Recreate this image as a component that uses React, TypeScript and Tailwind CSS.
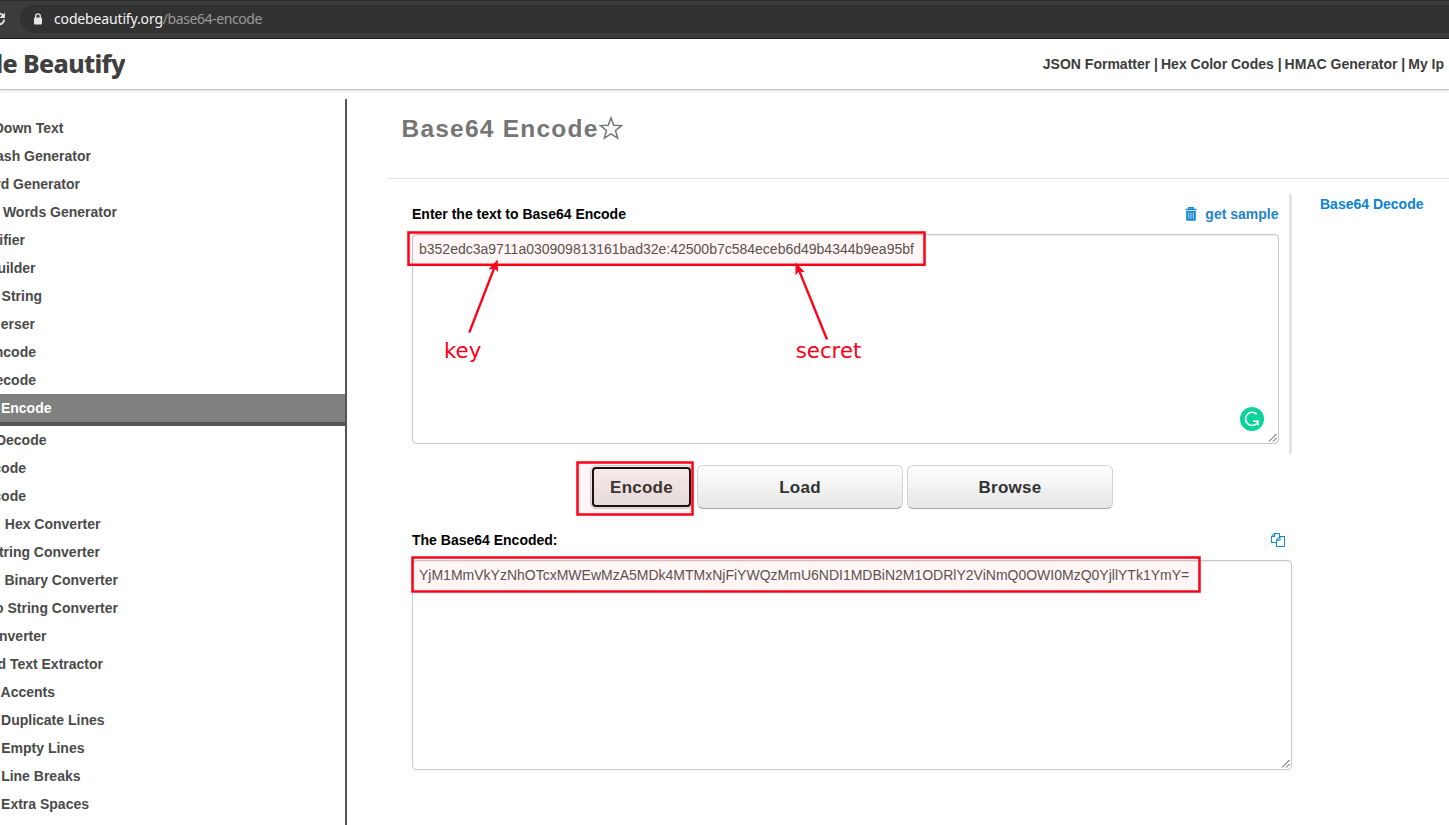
import React from "react";

type Item = { label: string; end: string; active?: boolean };

const items: Item[] = [
  { label: "Down Text", end: "w-[63.5px]" },
  { label: "ash Generator", end: "w-[91px]" },
  { label: "rd Generator", end: "w-[80px]" },
  { label: "Words Generator", end: "w-[117px]" },
  { label: "ifier", end: "w-[25px]" },
  { label: "uilder", end: "w-[35.5px]" },
  { label: "String", end: "w-[42px]" },
  { label: "erser", end: "w-[35px]" },
  { label: "ncode", end: "w-[36px]" },
  { label: "ecode", end: "w-[36px]" },
  { label: "Encode", end: "w-[51.5px]", active: true },
  { label: "Decode", end: "w-[46.5px]" },
  { label: "code", end: "w-[26px]" },
  { label: "code", end: "w-[26px]" },
  { label: "Hex Converter", end: "w-[100.5px]" },
  { label: "tring Converter", end: "w-[100px]" },
  { label: "Binary Converter", end: "w-[118px]" },
  { label: "o String Converter", end: "w-[118px]" },
  { label: "nverter", end: "w-[46.5px]" },
  { label: "d Text Extractor", end: "w-[103px]" },
  { label: "Accents", end: "w-[55px]" },
  { label: "Duplicate Lines", end: "w-[104.5px]" },
  { label: "Empty Lines", end: "w-[84.5px]" },
  { label: "Line Breaks", end: "w-[80.5px]" },
  { label: "Extra Spaces", end: "w-[89px]" },
];

function AddressBar() {
  return (
    <div className="flex h-[39px] shrink-0 items-start border-b border-[#1c1c1c] bg-[#3c3c3c] pt-[5px] shadow-[inset_0_1px_0_#2c2c2c]">
      <svg className="h-7 w-5 shrink-0" viewBox="0 0 20 28" fill="none">
        <path d="M-4 9.5A5.2 5.2 0 0 1 3.5 11M4.2 14.5A5.2 5.2 0 0 1-3 19" stroke="#e8e8e8" strokeWidth="1.9" />
        <path d="M4.9 7.5V13H-.6Z" fill="#e8e8e8" />
      </svg>
      <div className="flex h-7 flex-1 items-center rounded-l-full bg-[#323232] pl-[13px]">
        <svg className="h-3 w-[10px]" viewBox="0 0 10 12">
          <rect x="1" y="4.5" width="8" height="7" rx="1" fill="#e6e6e6" />
          <path d="M2.7 5V3.2a2.3 2.3 0 0 1 4.6 0V5" fill="none" stroke="#e6e6e6" strokeWidth="1.3" />
        </svg>
        <div className="pl-[11px] font-['Noto_Sans',sans-serif] text-[14px] leading-7 tracking-[-0.43px] whitespace-nowrap text-[#9a9a9a]">
          <span className="tracking-[-0.15px] text-[#f2f2f2]">codebeautify.org</span>/base64-encode
        </div>
      </div>
    </div>
  );
}

function Header() {
  return (
    <header className="flex h-[51px] shrink-0 items-center justify-between border-b border-[#c4c4c4] bg-white shadow-[0_1px_3px_rgba(0,0,0,0.15)]">
      <div className="flex w-[125px] justify-end overflow-hidden pb-[3px] font-['Noto_Sans',sans-serif] text-[25px] leading-[48px] font-extrabold tracking-[-0.65px] whitespace-nowrap text-[#404040]">
        <span>de Beautify</span>
      </div>
      <nav className="flex gap-[3px] pr-[5px] text-[14px] font-bold whitespace-nowrap text-[#3c3c3c]">
        <span>JSON Formatter |</span>
        <span>Hex Color Codes |</span>
        <span>HMAC Generator |</span>
        <span>My Ip</span>
      </nav>
    </header>
  );
}

function Sidebar() {
  return (
    <aside className="mt-[9px] w-[347px] shrink-0 overflow-hidden border-r-2 border-[#555] pt-[15px]">
      {items.map((it, i) => (
        <div
          key={i}
          className={
            it.active
              ? "box-content h-7 border-b-4 border-[#555] bg-[#808080] text-white"
              : "h-7 text-[#4a4a4a]"
          }
        >
          <div className={`flex justify-end overflow-hidden text-[14px] leading-7 font-bold whitespace-nowrap ${it.end}`}>
            <span>{it.label}</span>
          </div>
        </div>
      ))}
    </aside>
  );
}

function Grip() {
  return (
    <svg className="absolute right-0 bottom-0 h-[10px] w-[10px]" viewBox="0 0 10 10">
      <path d="M1 8.5L8.5 1M5 8.5L8.5 5" stroke="#404040" strokeWidth="1" />
    </svg>
  );
}

const bigButton =
  "h-11 w-[206px] rounded-[6px] border border-[#d2d2d2] border-b-[#a8a8a8] bg-linear-to-b from-white to-[#e6e6e6] pt-px text-[17px] font-bold tracking-[0.25px] text-[#333]";

function Annotations() {
  return (
    <svg className="pointer-events-none absolute inset-0 h-full w-full" viewBox="0 0 1449 825">
      <g fill="#ff1000" fillOpacity="0.04" stroke="#ff0018" strokeWidth="2.5">
        <rect x="408.5" y="232.5" width="516" height="32.3" />
        <rect x="577.5" y="462.5" width="115" height="52" />
        <rect x="412.5" y="557.5" width="787" height="34" />
      </g>
      <g stroke="#ff0018" strokeWidth="2.3" fill="none">
        <path d="M469.3 332.5L495 266" />
        <path d="M827 339.5L798.5 269" />
      </g>
      <g fill="#ff0018">
        <path d="M497.7 259.5L498 272L494.6 268.5L488.3 269.5Z" />
        <path d="M795.6 262.5L804.8 272.2L798.8 271.6L795.4 275.3Z" />
      </g>
      <g fill="#ff0018" fontFamily="DejaVu Sans, sans-serif" fontSize="21.3">
        <text x="444" y="358">key</text>
        <text x="795.7" y="358">secret</text>
      </g>
    </svg>
  );
}

function Main() {
  return (
    <main className="flex min-w-0 flex-1 flex-col pl-[39px]">
      <div className="ml-px flex h-[89px] shrink-0 border-b border-[#e3e3e3] pt-[22px] pl-[14.5px]">
        <h1 className="h-8 w-[198px] text-[24.5px] leading-[34px] font-bold tracking-[1.22px] whitespace-nowrap text-[#757575]">Base64 Encode</h1>
        <svg className="mt-[4px] -ml-px h-6 w-6" viewBox="0 0 24 24" fill="none" stroke="#757575" strokeWidth="1.5">
          <path d="M12 1.9L14.8 9.2L22.6 9.6L16.5 14.5L18.6 22.1L12 17.8L5.4 22.1L7.5 14.5L1.4 9.6L9.2 9.2Z" />
        </svg>
      </div>
      <div className="flex pt-[15px]">
        <div className="w-[906px] shrink-0 pl-[26px]">
          <section className="h-[260px] border-r-[3px] border-[#e5e5e5] pr-[10px]">
            <div className="flex h-10 items-center justify-between text-[14px] font-bold">
              <label className="text-black">Enter the text to Base64 Encode</label>
              <div className="flex items-center gap-[8px] pr-[0.5px] text-[#2385c6]">
                <svg className="h-[14px] w-3" viewBox="0 0 12 14">
                  <path d="M0.5 2.5h11M3.8 2.5V.8h4.4v1.7" fill="none" stroke="#1687d0" strokeWidth="1.4" />
                  <path d="M1.2 4h9.6v8.7a1 1 0 0 1-1 1H2.2a1 1 0 0 1-1-1Z" fill="#1687d0" />
                  <path d="M3.7 5.5v6.3M6 5.5v6.3M8.3 5.5v6.3" stroke="#c5e1f2" strokeWidth=".9" />
                </svg>
                <span>get sample</span>
              </div>
            </div>
            <div className="relative h-[210px] rounded border border-[#c8c8c8] bg-white px-[6px] pt-1 text-[14px] leading-5 whitespace-nowrap text-[#555] shadow-[inset_0_1px_1px_rgba(0,0,0,0.075)]">
              b352edc3a9711a030909813161bad32e:42500b7c584eceb6d49b4344b9ea95bf
              <svg className="absolute right-[14px] bottom-[12px] h-6 w-6" viewBox="0 0 24 24" fill="none">
                <circle cx="12" cy="12" r="12" fill="#0cd39a" />
                <path d="M16.8 7.2A6.6 6.6 0 1 0 16.8 16.6L17.6 15" stroke="white" strokeWidth="1.6" />
                <path d="M13 14.2h5v4.4" stroke="white" strokeWidth="1.6" />
              </svg>
              <Grip />
            </div>
          </section>
          <div className="flex h-[55px] gap-1 pt-[11px] pl-[178px]">
            <button className="flex h-11 w-[103px] items-start rounded-[6px] border border-[#cfcfcf] bg-linear-to-b from-[#f6f4f4] to-[#e4e2e2] pt-px pl-px text-[17px] font-bold tracking-[0.25px] text-[#333]">
              <span className="flex h-10 w-[99px] items-center justify-center rounded-[4px] border-2 border-[#111] pt-px">Encode</span>
            </button>
            <button className={bigButton}>Load</button>
            <button className={bigButton}>Browse</button>
          </div>
          <section className="pt-[11px]">
            <div className="flex h-10 items-center justify-between pr-[7px] text-[14px] font-bold text-black">
              <label>The Base64 Encoded:</label>
              <svg className="h-[14px] w-[14px]" viewBox="0 0 14 14" fill="none" stroke="#1687d0" strokeWidth="1.05">
                <path d="M5.5 9.5H.5V3.5L3.5.5H8.5V4M3.5.5V3.5H.5M5.5 7.2L9 3.5H13.5V13.4H5.5ZM9 3.5V7.2H5.5" />
              </svg>
            </div>
            <div className="relative h-[210px] rounded border border-[#c8c8c8] bg-white px-[6px] pt-1 text-[14px] leading-5 whitespace-nowrap text-[#555] shadow-[inset_0_1px_1px_rgba(0,0,0,0.075)]">
              YjM1MmVkYzNhOTcxMWEwMzA5MDk4MTMxNjFiYWQzMmU6NDI1MDBiN2M1ODRlY2ViNmQ0OWI0MzQ0YjllYTk1YmY=
              <Grip />
            </div>
          </section>
        </div>
        <a className="pl-7 text-[14px] leading-5 font-bold whitespace-nowrap text-[#0a84d0]">Base64 Decode</a>
      </div>
    </main>
  );
}

export default function App() {
  return (
    <div className="relative flex h-[825px] w-[1449px] flex-col overflow-hidden bg-white font-['Liberation_Sans',Arial,sans-serif]">
      <AddressBar />
      <Header />
      <div className="flex min-h-0 flex-1">
        <Sidebar />
        <Main />
      </div>
      <Annotations />
    </div>
  );
}
